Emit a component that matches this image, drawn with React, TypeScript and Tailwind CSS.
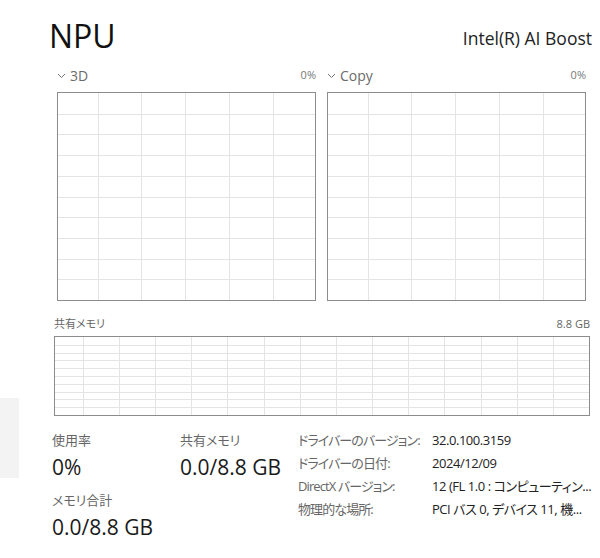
import React from 'react';

// grid for graphs
const Grid = ({ w, h, cols, colOffset, rows }: { w: number; h: number; cols: number; colOffset: number; rows: number }) => {
    const vx: number[] = [];
    for (let x = colOffset; x < w - 2; x += cols) vx.push(Math.round(x) + 0.5);
    const hy: number[] = [];
    for (let i = 1; i < rows; i++) hy.push(Math.round((h / rows) * i) + 0.5);
    return (
        <svg width={w} height={h} className="block">
            {vx.map(x => <line key={'v' + x} x1={x} x2={x} y1={0} y2={h} stroke="#e4e4e4" strokeWidth={1} />)}
            {hy.map(y => <line key={'h' + y} x1={0} x2={w} y1={y} y2={y} stroke="#e4e4e4" strokeWidth={1} />)}
        </svg>
    );
};

const Chevron = () => (
    <svg width="9" height="6" viewBox="0 0 9 6" className="mr-[4px] mt-[1px]">
        <path d="M1 1 L4.5 4.5 L8 1" fill="none" stroke="#777" strokeWidth="1" />
    </svg>
);

const GraphPanel = ({ title, offset }: { title: string; offset: number }) => (
    <div className="flex flex-col">
        <div className="flex items-center justify-between h-[20px] mb-[7px]">
            <div className="flex items-center text-[14px] text-[#6b6b6b]">
                <Chevron />
                <span>{title}</span>
            </div>
            <span className="text-[11px] text-[#777]">0%</span>
        </div>
        <div className="border border-[#8c8c8c] bg-white">
            <Grid w={257} h={207} cols={43.8} colOffset={offset} rows={10} />
        </div>
    </div>
);

const Stat = ({ label, value }: { label: string; value: string }) => (
    <div className="flex flex-col">
        <span className="text-[13px] text-[#666] leading-[18px]">{label}</span>
        <span className="text-[21px] text-[#1a1a1a] leading-[28px] mt-[4px] whitespace-nowrap">{value}</span>
    </div>
);

const details = [
    ['ドライバーのバージョン:', '32.0.100.3159'],
    ['ドライバーの日付:', '2024/12/09'],
    ['DirectX バージョン:', '12 (FL 1.0 : コンピューティン...'],
    ['物理的な場所:', 'PCI バス 0, デバイス 11, 機...'],
];

export default function App() {
    return (
        <div className="w-[600px] h-[558px] bg-white relative overflow-hidden font-['Open_Sans','Noto_Sans','Noto_Sans_CJK_JP',sans-serif] [font-feature-settings:'palt']">
            {/* sidebar selection fragment */}
            <div className="absolute left-0 top-[398px] w-[19px] h-[80px] bg-[#f3f3f3]"></div>

            {/* Header */}
            <div className="flex items-end justify-between pl-[49px] pr-[8px] pt-[12px] h-[56px]">
                <h1 className="text-[32px] leading-[40px] text-[#111]">NPU</h1>
                <span className="text-[17.5px] text-[#222] mb-[5px]">Intel(R) AI Boost</span>
            </div>

            {/* Engine graphs */}
            <div className="flex gap-[11px] pl-[57px] mt-[9px]">
                <GraphPanel title="3D" offset={39.5} />
                <GraphPanel title="Copy" offset={39.5} />
            </div>

            {/* Shared memory */}
            <div className="pl-[54px] pr-[10px] mt-[14px]">
                <div className="flex justify-between items-center h-[18px] mb-[3px]">
                    <span className="text-[11px] text-[#666]">共有メモリ</span>
                    <span className="text-[11px] text-[#666]">8.8 GB</span>
                </div>
                <div className="border border-[#8c8c8c] w-[536px]">
                    <Grid w={534} h={78} cols={36.2} colOffset={27.5} rows={10} />
                </div>
            </div>

            {/* Stats */}
            <div className="flex pl-[52px] mt-[15px]">
                <div className="flex flex-col gap-[10px] w-[128px] shrink-0">
                    <Stat label="使用率" value="0%" />
                    <Stat label="メモリ合計" value="0.0/8.8 GB" />
                </div>
                <div className="w-[118px] shrink-0">
                    <Stat label="共有メモリ" value="0.0/8.8 GB" />
                </div>
                <div className="flex flex-col w-[296px] shrink-0 -mt-[2px]">
                    {details.map(([k, v]) => (
                        <div key={k} className="flex text-[13px] leading-[23px] whitespace-nowrap">
                            <span className="w-[134px] shrink-0 text-[#666] tracking-[-0.9px]">{k}</span>
                            <span className="text-[#222] tracking-[-0.45px]">{v}</span>
                        </div>
                    ))}
                </div>
            </div>
        </div>
    );
}
